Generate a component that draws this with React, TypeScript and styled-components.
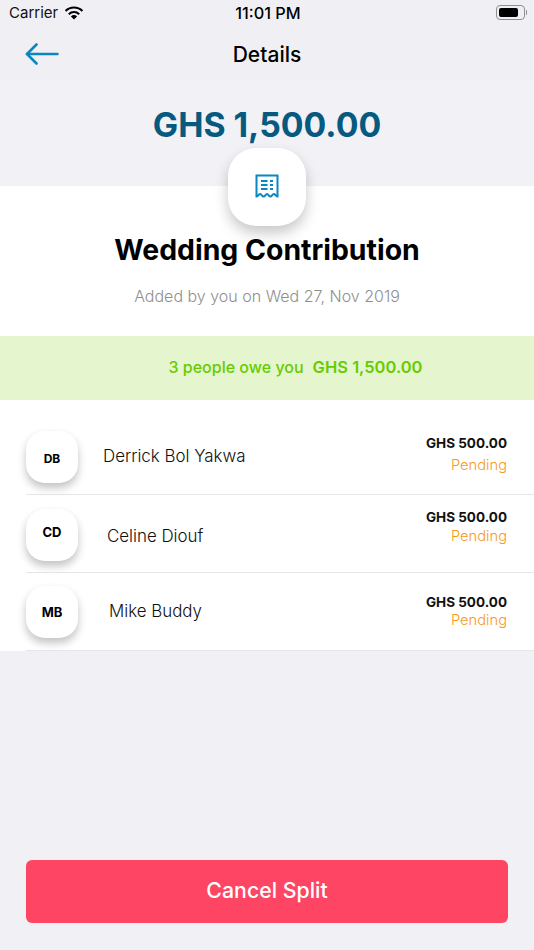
import React from 'react';
import styled, { createGlobalStyle } from 'styled-components';

const FONT = `Inter, 'Liberation Sans', sans-serif`;

const GlobalStyle = createGlobalStyle`
  html, body {
    margin: 0;
    padding: 0;
    background: #f0f0f5;
  }
  * {
    box-sizing: border-box;
  }
`;

const people = [
  { initials: 'DB', name: 'Derrick Bol Yakwa', top: 31, height: 95, nameGap: 25, nameDrop: -1, tagSize: 12, tagShift: 1, amountDrop: 3, statusGap: 4 },
  { initials: 'CD', name: 'Celine Diouf', top: 14, height: 78, nameGap: 29, nameDrop: 1, tagSize: 13, tagShift: -3, amountDrop: -1, statusGap: 1 },
  { initials: 'MB', name: 'Mike Buddy', top: 13, height: 78, nameGap: 31, nameDrop: -1, tagSize: 13, tagShift: 0, amountDrop: 7, statusGap: 0 },
];

const App = () => (
  <Page>
    <GlobalStyle />
    <Header>
      <StatusBar>
        <Carrier>
          Carrier
          <svg width="20" height="14" viewBox="0 0 20 14">
            <path d="M10 13.6 6.9 10.4a4.4 4.4 0 0 1 6.2 0z" fill="#000" />
            <path d="M4.8 8.2a7.4 7.4 0 0 1 10.4 0" fill="none" stroke="#000" strokeWidth="2.1" />
            <path d="M1.6 5a11.9 11.9 0 0 1 16.8 0" fill="none" stroke="#000" strokeWidth="2.1" />
          </svg>
        </Carrier>
        <Clock>11:01 PM</Clock>
        <Battery>
          <BatteryBody>
            <BatteryLevel />
          </BatteryBody>
          <BatteryCap />
        </Battery>
      </StatusBar>
      <NavBar>
        <BackButton>
          <svg width="34" height="22" viewBox="0 0 34 22" fill="none" stroke="#0a86c0" strokeWidth="2.6" strokeLinecap="round" strokeLinejoin="round">
            <path d="M32.500 11H2" />
            <path d="M11.500 1.500 2 11l9.500 9.500" />
          </svg>
        </BackButton>
        <Title>Details</Title>
      </NavBar>
    </Header>
    <AmountBand>GHS 1,500.00</AmountBand>
    <SummaryCard>
      <ReceiptTile>
        <svg width="24" height="24" viewBox="0 0 24 24" fill="none" stroke="#0a86c0" strokeWidth="2">
          <path d="M1.500 1.500h21v21c-1.800 0-2.200-2.400-3.700-2.400s-1.900 2.400-3.400 2.400-1.900-2.400-3.400-2.400-1.900 2.400-3.400 2.400-1.900-2.400-3.400-2.400-1.900 2.400-3.700 2.400z" />
          <path d="M6 7h6.500M6 11h6.500M6 15h6.500M15 7h3M15 11h3M15 15h3" />
        </svg>
      </ReceiptTile>
      <EventName>Wedding Contribution</EventName>
      <AddedBy>Added by you on Wed 27, Nov 2019</AddedBy>
    </SummaryCard>
    <OweBand>
      <OweLabel>3 people owe you</OweLabel>
      <OweAmount>GHS 1,500.00</OweAmount>
    </OweBand>
    <List>
      {people.map((p) => (
        <Row key={p.initials} $height={p.height} $top={p.top}>
          <Avatar>
            <Initials $size={p.tagSize} $shift={p.tagShift}>{p.initials}</Initials>
          </Avatar>
          <Name $gap={p.nameGap} $drop={p.nameDrop}>{p.name}</Name>
          <Money $drop={p.amountDrop}>
            <Amount>GHS 500.00</Amount>
            <Status $gap={p.statusGap}>Pending</Status>
          </Money>
        </Row>
      ))}
    </List>
    <Footer>
      <CancelButton>Cancel Split</CancelButton>
    </Footer>
  </Page>
);

const Page = styled.div`
  display: flex;
  flex-direction: column;
  width: 534px;
  height: 950px;
  overflow: hidden;
  background: #f0f0f5;
  font-family: ${FONT};
  color: #000;
`;

const Header = styled.div`
  background: #f0f0f4;
`;

const StatusBar = styled.div`
  display: grid;
  grid-template-columns: 1fr auto 1fr;
  align-items: center;
  height: 27px;
  padding: 0 7px 2px 9px;
`;

const Carrier = styled.div`
  display: flex;
  align-items: center;
  gap: 6px;
  font-size: 15px;
  color: #111;
`;

const Clock = styled.div`
  font-weight: 500;
  font-size: 16.300px;
`;

const Battery = styled.div`
  display: flex;
  align-items: center;
  justify-content: flex-end;
  gap: 1px;
`;

const BatteryBody = styled.div`
  width: 29px;
  height: 15px;
  padding: 2px;
  border: 1px solid #8e8e93;
  border-radius: 4px;
`;

const BatteryLevel = styled.div`
  width: 19px;
  height: 100%;
  border-radius: 2px;
  background: #000;
`;

const BatteryCap = styled.div`
  width: 1.500px;
  height: 5px;
  border-radius: 0 1px 1px 0;
  background: #8e8e93;
`;

const NavBar = styled.div`
  display: flex;
  align-items: center;
  justify-content: center;
  position: relative;
  height: 53px;
  padding-top: 2px;
`;

const BackButton = styled.div`
  display: flex;
  position: absolute;
  left: 25px;
  top: 16px;
`;

const Title = styled.div`
  font-size: 21px;
  font-weight: 500;
`;

const AmountBand = styled.div`
  height: 106px;
  padding-top: 23px;
  text-align: center;
  font-size: 33.800px;
  line-height: 44px;
  font-weight: 700;
  color: #065a80;
  background: #f1f1f6;
`;

const SummaryCard = styled.div`
  display: flex;
  flex-direction: column;
  align-items: center;
  position: relative;
  height: 150px;
  padding-top: 47px;
  background: #fff;
`;

const ReceiptTile = styled.div`
  display: flex;
  align-items: center;
  justify-content: center;
  position: absolute;
  top: -38px;
  left: 228px;
  width: 78px;
  height: 78px;
  padding-bottom: 2px;
  border-radius: 28px;
  background: #fff;
  box-shadow: 0 7px 14px rgba(0, 0, 0, 0.22);
`;

const EventName = styled.div`
  font-size: 28.400px;
  line-height: 34px;
  font-weight: 700;
`;

const AddedBy = styled.div`
  margin-top: 17px;
  font-size: 16px;
  line-height: 24px;
  font-weight: 300;
  color: #8f8f8f;
`;

const OweBand = styled.div`
  display: flex;
  align-items: center;
  justify-content: center;
  gap: 9px;
  height: 64px;
  padding: 0 0 2px 57px;
  background: #e5f5cd;
  color: #66cc00;
`;

const OweLabel = styled.div`
  font-size: 16px;
  font-weight: 500;
`;

const OweAmount = styled.div`
  font-size: 16.500px;
  font-weight: 600;
`;

const List = styled.div`
  display: flex;
  flex-direction: column;
  padding-left: 26px;
  background: #fff;
`;

const Row = styled.div<{ $height: number; $top: number }>`
  display: flex;
  align-items: flex-start;
  height: ${(p) => p.$height}px;
  padding-top: ${(p) => p.$top}px;
  padding-right: 27px;
  border-bottom: 1px solid #e6e6ea;
`;

const Avatar = styled.div`
  display: flex;
  align-items: center;
  justify-content: center;
  flex: none;
  width: 52px;
  height: 52px;
  border-radius: 19px;
  background: #fff;
  box-shadow: 0 5px 9px rgba(0, 0, 0, 0.24);
`;

const Initials = styled.span<{ $size: number; $shift: number }>`
  position: relative;
  top: ${(p) => p.$shift}px;
  font-size: ${(p) => p.$size}px;
  font-weight: 700;
`;

const Name = styled.div<{ $gap: number; $drop: number }>`
  flex: 1;
  margin: ${(p) => p.$drop}px 0 0 ${(p) => p.$gap}px;
  font-size: 16.900px;
  line-height: 52px;
  font-weight: 300;
  color: #111;
`;

const Money = styled.div<{ $drop: number }>`
  display: flex;
  flex-direction: column;
  align-items: flex-end;
  margin-top: ${(p) => p.$drop}px;
`;

const Amount = styled.div`
  font-size: 13.500px;
  line-height: 18px;
  font-weight: 700;
  color: #111;
`;

const Status = styled.div<{ $gap: number }>`
  margin-top: ${(p) => p.$gap}px;
  font-size: 14.700px;
  line-height: 18px;
  font-weight: 300;
  color: #f59a1d;
`;

const Footer = styled.div`
  display: flex;
  justify-content: center;
  margin-top: auto;
  padding: 0 26px 27px;
`;

const CancelButton = styled.div`
  display: flex;
  align-items: center;
  justify-content: center;
  width: 100%;
  height: 63px;
  padding-bottom: 3px;
  border-radius: 6px;
  background: #ff4564;
  color: #fff;
  font-size: 21.300px;
  font-weight: 500;
`;

export default App;
